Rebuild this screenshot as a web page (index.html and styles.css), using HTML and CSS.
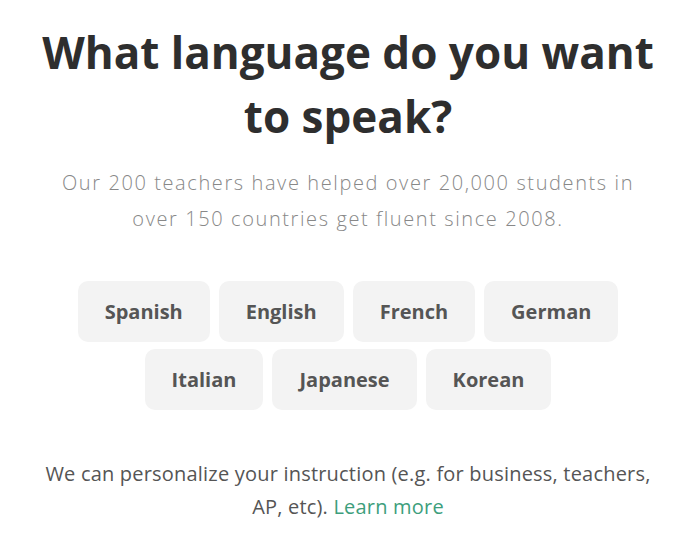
FILE: index.html
```html
<!DOCTYPE html>
<html>
<head>
<meta charset="utf-8">
<link rel="stylesheet" href="styles.css">
</head>
<body>
<main class="page">
  <h1 class="title">What language do you want to speak?</h1>
  <p class="subtitle">Our 200 teachers have helped over 20,000 students in over 150 countries get fluent since 2008.</p>
  <div class="langs">
    <button class="lang">Spanish</button>
    <button class="lang">English</button>
    <button class="lang">French</button>
    <button class="lang">German</button>
    <button class="lang">Italian</button>
    <button class="lang">Japanese</button>
    <button class="lang">Korean</button>
  </div>
  <p class="note"><span>We can personalize your instruction (e.g. for business, teachers,</span> <span>AP, etc).</span> <a class="more" href="#">Learn more</a></p>
</main>
</body>
</html>
```
FILE: styles.css
```css
html, body {
  margin: 0;
  padding: 0;
  background: #fff;
}
body {
  font-family: "Open Sans", "Liberation Sans", sans-serif;
}
.page {
  width: 660px;
  margin: 0 auto;
  padding-top: 20px;
  text-align: center;
}
.title {
  margin: 0;
  font-size: 44px;
  line-height: 64px;
  font-weight: 700;
  color: #2e2e2e;
}
.subtitle {
  margin: 17px auto 0;
  width: 590px;
  font-size: 20px;
  line-height: 36px;
  font-weight: 300;
  letter-spacing: 1.6px;
  color: #888;
}
.langs {
  margin: 44px auto 0;
  display: flex;
  flex-wrap: wrap;
  justify-content: center;
  column-gap: 9px;
  row-gap: 7px;
  width: 560px;
}
.lang {
  font-family: inherit;
  border: 0;
  background: #f3f3f3;
  border-radius: 10px;
  height: 61px;
  padding: 0 27px;
  font-size: 20px;
  font-weight: 700;
  color: #555;
}
.note {
  margin: 47px auto 0;
  width: 630px;
  font-size: 20px;
  line-height: 33px;
  font-weight: 400;
  letter-spacing: 0.2px;
  color: #555;
}
.more {
  color: #3d9e7c;
  text-decoration: none;
}
```
